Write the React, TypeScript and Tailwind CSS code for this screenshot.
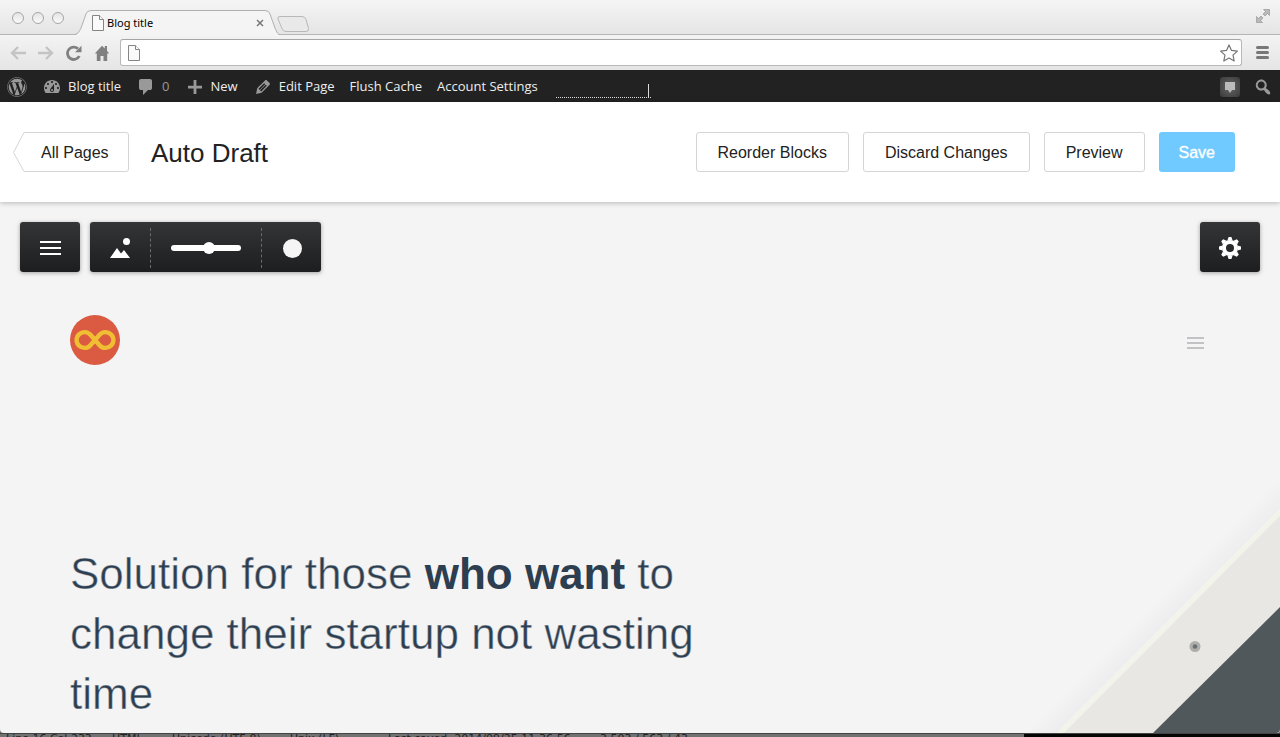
import type { ReactNode } from 'react'
import { FaWordpress } from 'react-icons/fa'

interface IconProps {
  d: string
  size?: number
}

// 20x20 glyphs of the admin bar
const icons = {
  dashboard:
    'M3.76 16h12.48c1.1-1.37 1.76-3.11 1.76-5 0-4.42-3.58-8-8-8s-8 3.58-8 8c0 1.89.66 3.63 1.76 5zM10 4c.55 0 1 .45 1 1s-.45 1-1 1-1-.45-1-1 .45-1 1-1zM6 6c.55 0 1 .45 1 1s-.45 1-1 1-1-.45-1-1 .45-1 1-1zm8 0c.55 0 1 .45 1 1s-.45 1-1 1-1-.45-1-1 .45-1 1-1zm-5.37 5.55L12 7v6c0 1.1-.9 2-2 2s-2-.9-2-2c0-.57.24-1.08.63-1.45zM4 10c.55 0 1 .45 1 1s-.45 1-1 1-1-.45-1-1 .45-1 1-1zm12 0c.55 0 1 .45 1 1s-.45 1-1 1-1-.45-1-1 .45-1 1-1zm-5 3c0-.55-.45-1-1-1s-1 .45-1 1 .45 1 1 1 1-.45 1-1z',
  comment:
    'M5 2h9q.82 0 1.41.59T16 4v7q0 .82-.59 1.41T14 13h-2l-5 5v-5H5q-.82 0-1.41-.59T3 11V4q0-.82.59-1.41T5 2z',
  plus: 'M17 8.7v2.8h-5.6v5.6H8.6v-5.6H3V8.7h5.6V3.1h2.8v5.6z',
  edit: 'M13.89 3.39l2.71 2.72c.46.46.42 1.24.03 1.64l-8.01 8.02-5.56 1.16 1.16-5.58s7.6-7.63 7.99-8.03c.39-.39 1.22-.39 1.68.07zm-2.73 2.79l-5.59 5.61 1.11 1.11 5.54-5.65zm-2.97 8.23l5.58-5.6-1.07-1.08-5.59 5.6z',
  search:
    'M12.14 4.18c1.87 1.87 2.11 4.75.72 6.89.12.1.22.21.36.31.2.16.47.36.81.59.34.24.56.39.66.47.42.31.73.57.94.78.32.32.6.65.84 1 .25.35.44.69.59 1.04.14.35.21.68.18 1-.02.32-.14.59-.36.81s-.49.34-.81.36c-.31.02-.65-.04-.99-.19-.35-.14-.7-.34-1.04-.59-.35-.24-.68-.52-1-.84-.21-.21-.47-.52-.77-.93-.1-.13-.25-.35-.47-.66-.22-.32-.4-.57-.56-.78-.16-.2-.29-.35-.44-.5-2.07 1.09-4.69.76-6.44-.98-2.14-2.15-2.14-5.64 0-7.78 2.15-2.15 5.63-2.15 7.78 0zm-1.41 6.36c1.36-1.37 1.36-3.58 0-4.95-1.37-1.37-3.59-1.37-4.95 0-1.37 1.37-1.37 3.58 0 4.95 1.36 1.37 3.58 1.37 4.95 0z',
}

function AdminIcon({ d, size = 20 }: IconProps) {
  return (
    <svg width={size} height={size} viewBox="0 0 20 20" fill="#999" fillRule="evenodd" className="shrink-0">
      <path d={d} />
    </svg>
  )
}

function PageIcon() {
  return (
    <svg width="12" height="16" viewBox="0 0 12 16" fill="#fafafa" stroke="#858585" className="shrink-0">
      <path d="M.5.5h7l4 4v11H.5z" />
      <path d="M7.5.5v4h4" />
    </svg>
  )
}

function TabStrip() {
  return (
    <div className="relative flex h-[35px] bg-linear-to-b from-[#f5f5f5] to-[#e4e4e4]">
      <div className="absolute inset-x-0 bottom-0 h-px bg-[#b5b5b5]" />
      <div className="flex w-[75px] items-center gap-2 pl-3">
        {['Close', 'Minimize', 'Zoom'].map((label) => (
          <button
            key={label}
            aria-label={label}
            className="h-3 w-3 rounded-full border border-[#a6a6a6] bg-linear-to-b from-[#e4e4e4] to-[#fafafa]"
          />
        ))}
      </div>
      <div className="relative w-[202px] pt-[10px]">
        <svg width="204" height="25" viewBox="0 0 204 25" className="absolute top-[10px] left-0">
          <path d="M0 25C4 24 4 22 6 18L11 4Q12 .5 16 .5H190Q194 .5 195 4L200 18C202 22 202 24 204 25z" fill="#f4f4f4" />
          <path
            d="M-2 24.5C3 24.5 4 22 6 18L11 4Q12 .5 16 .5H190Q194 .5 195 4L200 18C202 23 203 24.5 206 24.5"
            fill="none"
            stroke="#b0b0b0"
          />
        </svg>
        <div className="relative flex h-[25px] items-center pr-[13px] pl-[17px]">
          <PageIcon />
          <span className="ml-[3px] flex-1 pt-px font-['Noto_Sans','Open_Sans',sans-serif] text-[11px] text-black">Blog title</span>
          <button aria-label="Close tab">
            <svg width="8" height="8" viewBox="0 0 8 8" stroke="#777" strokeWidth="1.5">
              <path d="M1 1l6 6M7 1L1 7" />
            </svg>
          </button>
        </div>
      </div>
      <button aria-label="New tab" className="pt-3">
        <svg width="32" height="16" viewBox="0 0 32 16" fill="#e9e9e9" stroke="#b8b8b8">
          <path d="M3 .5h22q3 0 4 3l2.5 9q.5 3-2.5 3H9q-3 0-4-3L1 3Q0 .5 3 .5z" />
        </svg>
      </button>
      <button aria-label="Full screen" className="mr-[10px] mb-1 ml-auto">
        <svg width="14" height="14" viewBox="0 0 14 14" fill="#b9b9b9" stroke="#8f8f8f" strokeWidth="0.6">
          <path d="M7.5.5h6v6l-2-2-2.5 2.4L7 5l2.5-2.5zM6.5 13.5h-6v-6l2 2L5 7l2 2-2.5 2.5z" />
        </svg>
      </button>
    </div>
  )
}

function Toolbar() {
  return (
    <div className="flex h-[35px] items-center bg-linear-to-b from-[#f3f3f3] to-[#e5e5e5] pr-[11px] pl-[10px]">
      <button aria-label="Back" className="mr-3">
        <svg width="16" height="14" viewBox="0 0 16 14" fill="none" stroke="#c4c4c4" strokeWidth="2.4">
          <path d="M8 1L2 7l6 6M2 7h14" />
        </svg>
      </button>
      <button aria-label="Forward" className="mr-3">
        <svg width="16" height="14" viewBox="0 0 16 14" fill="none" stroke="#c4c4c4" strokeWidth="2.4">
          <path d="M8 1l6 6-6 6M14 7H0" />
        </svg>
      </button>
      <button aria-label="Reload" className="mr-3">
        <svg width="16" height="16" viewBox="0 0 16 16" fill="none" stroke="#808080" strokeWidth="2.8">
          <path d="M13.3 11A6.2 6.2 0 1 1 12 3.8" />
          <path d="M15.5.8v6.4H9z" fill="#808080" stroke="none" />
        </svg>
      </button>
      <button aria-label="Home" className="mr-[10px]">
        <svg width="16" height="16" viewBox="0 0 16 16" fill="#808080">
          <path d="M8 .8L.8 8.4h2V16h3.7v-5h3v5h3.7V8.4h2L13 5.8V1h-2.2v2.6z" />
        </svg>
      </button>
      <div className="flex h-[27px] flex-1 items-center rounded-[3px] border border-[#b8b8b8] border-t-[#a5a5a5] bg-white pr-[3px] pl-[7px]">
        <PageIcon />
        <input aria-label="Address" type="text" className="min-w-0 flex-1 bg-transparent px-2 text-sm outline-none" />
        <button aria-label="Bookmark this page">
          <svg width="18" height="18" viewBox="0 0 18 18" fill="#fff" stroke="#757575" strokeLinejoin="round" strokeWidth="1.2">
            <path d="M9 .9l2.5 5.5 5.9.7-4.4 4 1.2 5.9L9 14.1 3.8 17 5 11.1.6 7.1l5.9-.7z" />
          </svg>
        </button>
      </div>
      <button aria-label="Menu" className="ml-[14px] flex flex-col gap-[2px]">
        <span className="h-[3px] w-[13px] rounded-sm bg-[#777]" />
        <span className="h-[3px] w-[13px] rounded-sm bg-[#777]" />
        <span className="h-[3px] w-[13px] rounded-sm bg-[#777]" />
      </button>
    </div>
  )
}

function AdminLink({ icon, children }: { icon?: string; children: ReactNode }) {
  return (
    <a href="#" className="flex items-center gap-[6px] whitespace-nowrap">
      {icon && <AdminIcon d={icon} />}
      {children}
    </a>
  )
}

function AdminBar() {
  return (
    <nav className="flex h-8 items-center gap-[15px] bg-[#222] px-[7px] pt-px font-['Open_Sans',sans-serif] text-[13px] font-medium text-[#eee]">
      <a href="#" aria-label="About WordPress">
        <FaWordpress size={20} color="#999" />
      </a>
      <AdminLink icon={icons.dashboard}>Blog title</AdminLink>
      <a href="#" className="flex items-center gap-[6px] text-[#999]">
        <AdminIcon d={icons.comment} />0
      </a>
      <AdminLink icon={icons.plus}>New</AdminLink>
      <AdminLink icon={icons.edit}>Edit Page</AdminLink>
      <AdminLink>Flush Cache</AdminLink>
      <AdminLink>Account Settings</AdminLink>
      <div className="mb-1 ml-[3px] flex h-[14px] w-[95px] justify-end self-end border-b border-dotted border-[#ddd] pr-[2px]">
        <span className="h-[13px] w-px bg-[#ddd]" />
      </div>
      <button
        aria-label="Notifications"
        className="ml-auto flex h-5 w-5 items-center justify-center rounded-[3px] bg-radial from-[#666] to-[#3a3a3a]"
      >
        <svg width="10" height="12" viewBox="0 0 10 12" fill="#bbb">
          <path d="M0 1h10v8H7l-2 3-2-3H0z" />
        </svg>
      </button>
      <button aria-label="Search" className="-ml-[2px]">
        <AdminIcon d={icons.search} />
      </button>
    </nav>
  )
}

function OutlineButton({ children }: { children: ReactNode }) {
  return (
    <button className="h-10 rounded-[3px] border border-[#d5d5d5] bg-white px-[21px] pt-px whitespace-nowrap">
      {children}
    </button>
  )
}

function PageHeader() {
  return (
    <header className="relative z-10 flex h-[100px] items-center bg-white pr-[45px] pl-[13px] text-base text-[#222] shadow-[0_1px_5px_rgba(0,0,0,0.25)]">
      <a href="#" className="relative flex h-10 w-[116px] items-center pt-px pl-7">
        <svg width="116" height="40" viewBox="0 0 116 40" fill="#fff" stroke="#d5d5d5" className="absolute inset-0">
          <path d="M11 .5H113q2.5 0 2.5 2.5v34q0 2.5-2.5 2.5H11L.5 20.5z" />
        </svg>
        <span className="relative">All Pages</span>
      </a>
      <h1 className="ml-[22px] pt-[2px] text-[26px] whitespace-nowrap">Auto Draft</h1>
      <div className="ml-auto flex gap-[14px]">
        <OutlineButton>Reorder Blocks</OutlineButton>
        <OutlineButton>Discard Changes</OutlineButton>
        <OutlineButton>Preview</OutlineButton>
        <button className="h-10 rounded-[3px] bg-[#70c9ff] px-5 pt-px text-white [-webkit-text-stroke:1px_#ffffff66]">Save</button>
      </div>
    </header>
  )
}

const panel = 'flex h-[50px] rounded-[3px] bg-linear-to-b from-[#343537] to-[#1d1e20] pt-[2px] shadow-[0_1px_4px_rgba(0,0,0,0.35)]'

function BlockTools() {
  return (
    <div className="flex gap-[10px] px-5">
      <button aria-label="Blocks" className={`${panel} w-[60px] flex-col items-center justify-center gap-1`}>
        <span className="h-[2px] w-[21px] bg-white" />
        <span className="h-[2px] w-[21px] bg-white" />
        <span className="h-[2px] w-[21px] bg-white" />
      </button>
      <div className={`${panel} items-center`}>
        <button aria-label="Background image" className="flex w-[60px] justify-center">
          <svg width="20" height="20" viewBox="0 0 20 20" fill="#fff">
            <circle cx="16.5" cy="3.5" r="3.5" />
            <path d="M0 20L7 10l4 5.5 3-3.5 6 8z" />
          </svg>
        </button>
        <div className="flex h-10 w-[112px] items-center justify-center border-x border-dashed border-[#6a6b6f]">
          <input
            type="range"
            aria-label="Opacity"
            defaultValue={55}
            className="h-[6px] w-[70px] appearance-none rounded-full bg-white [&::-webkit-slider-thumb]:h-3 [&::-webkit-slider-thumb]:w-3 [&::-webkit-slider-thumb]:appearance-none [&::-webkit-slider-thumb]:rounded-full [&::-webkit-slider-thumb]:bg-white"
          />
        </div>
        <button aria-label="Background color" className="flex w-[59px] justify-center pl-px">
          <span className="h-[19px] w-[19px] rounded-full bg-[#f5f5f5]" />
        </button>
      </div>
      <button aria-label="Settings" className={`${panel} ml-auto w-[60px] items-center justify-center`}>
        <svg width="22" height="22" viewBox="-11 -11 22 22">
          <circle r="6" fill="none" stroke="#fff" strokeWidth="4" />
          {[0, 45, 90, 135, 180, 225, 270, 315].map((angle) => (
            <path key={angle} d="M-2.6-7.5L-1.4-11h2.8l1.2 3.5z" fill="#fff" transform={`rotate(${angle})`} />
          ))}
        </svg>
      </button>
    </div>
  )
}

function TabletArt() {
  return (
    <svg width="250" height="250" viewBox="0 0 250 250" className="absolute right-0 bottom-0">
      <defs>
        <linearGradient id="edge" gradientUnits="userSpaceOnUse" x1="122" y1="122" x2="139" y2="139">
          <stop offset="0" stopColor="#f4f4f4" />
          <stop offset="1" stopColor="#ededef" />
        </linearGradient>
      </defs>
      <path d="M250 0V30L30 250H0v-6L244 0z" fill="url(#edge)" />
      <path d="M250 25v225H26z" fill="#f2f3ea" />
      <path d="M250 33v217H34z" fill="#e8e7e3" />
      <path d="M250 124v126H123z" fill="#50585b" />
      <circle cx="165" cy="163.5" r="5.5" fill="#aeaeaa" />
      <circle cx="165" cy="163.5" r="2.3" fill="#6a7174" />
    </svg>
  )
}

function Canvas() {
  return (
    <main className="relative flex-1 overflow-hidden rounded-b bg-[#f4f4f4] pt-5 pb-2">
      <TabletArt />
      <div className="relative">
        <BlockTools />
        <div className="mt-[43px] flex items-center justify-between pr-[76px] pl-[70px]">
          <svg width="50" height="50" viewBox="0 0 50 50" role="img" aria-label="Logo">
            <circle cx="25" cy="25" r="25" fill="#da5b42" />
            <path
              d="M20.44 19.8A7.9 7.9 0 1 0 20.44 30.2L29.56 19.8A7.9 7.9 0 1 1 29.56 30.2z"
              fill="none"
              stroke="#f0be32"
              strokeWidth="4.4"
            />
          </svg>
          <button aria-label="Site menu" className="mt-[6px] flex flex-col gap-[3px]">
            <span className="h-[2px] w-[17px] bg-[#c2c2c5]" />
            <span className="h-[2px] w-[17px] bg-[#c2c2c5]" />
            <span className="h-[2px] w-[17px] bg-[#c2c2c5]" />
          </button>
        </div>
        {/* thin outline in the canvas colour gives the light cut of the face */}
        <h2 className="mt-[179px] ml-[70px] max-w-[640px] text-[44px] leading-[60px] text-[#2c3e50] [-webkit-text-stroke:1px_#f4f4f480]">
          Solution for those <strong className="font-bold [-webkit-text-stroke:0]">who want</strong> to change their startup
          not wasting time
        </h2>
      </div>
    </main>
  )
}

function StatusStrip() {
  return (
    <footer className="flex h-1 overflow-hidden border-t border-[#444] bg-[#727272] font-['DejaVu_Sans',sans-serif] text-[11px] leading-[10px] whitespace-nowrap text-[#222]">
      <span className="w-28 pl-[6px]">Line 16 Col 233</span>
      <span className="w-[60px]">HTML</span>
      <span className="w-[118px]">Unicode (UTF-8)</span>
      <span className="w-[98px]">Unix (LF)</span>
      <span className="w-[212px]">Last saved: 2014/09/25 11:36:56</span>
      <span>3,503 / 563 / 43</span>
      <span className="ml-auto h-1 w-1/5 bg-[#050505]" />
    </footer>
  )
}

export default function App() {
  return (
    <div className="flex min-h-screen flex-col bg-[#727272] font-['Liberation_Sans',Arial,sans-serif]">
      <TabStrip />
      <Toolbar />
      <AdminBar />
      <PageHeader />
      <Canvas />
      <StatusStrip />
    </div>
  )
}
